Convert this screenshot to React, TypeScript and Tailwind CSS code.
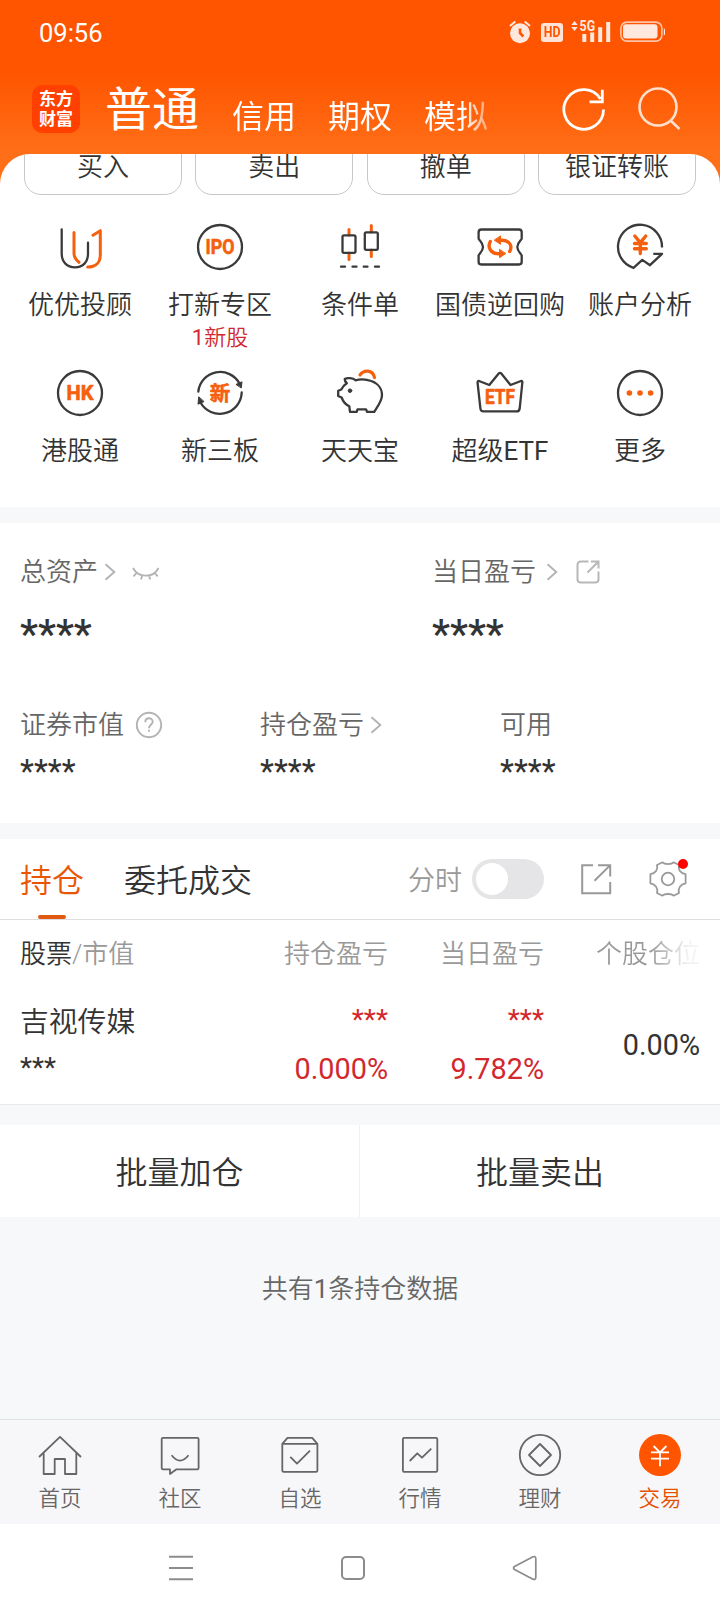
import { useState, type ReactNode } from 'react';

const INK = '#3a3a3a';
const ORANGE = '#f5600f';

const quickActions = ['买入', '卖出', '撤单', '银证转账'];

const Icon48 = ({ children }: { children: ReactNode }) => (
    <svg width="48" height="48" viewBox="0 0 48 48" fill="none" stroke={INK} strokeWidth="2.3" strokeLinecap="round" strokeLinejoin="round">
        {children}
    </svg>
);

interface BadgeTextProps {
    y: number;
    size: number;
    width: number;
    children: string;
}

const BadgeText = ({ y, size, width, children }: BadgeTextProps) => (
    <text
        x="24"
        y={y}
        textAnchor="middle"
        textLength={width}
        lengthAdjust="spacingAndGlyphs"
        fontSize={size}
        fontWeight="700"
        fill={ORANGE}
        stroke={ORANGE}
        strokeWidth="0.6"
        className="font-['Roboto','Noto_Sans_CJK_SC',sans-serif]"
    >
        {children}
    </text>
);

interface Service {
    label: string;
    latin?: string;
    newCount?: number;
    icon: ReactNode;
}

const services: Service[] = [
    {
        label: '优优投顾',
        icon: (
            <Icon48>
                <path d="M5.7 6.3V30.5C5.7 39 11 44.3 19 44.3S32 39 32 30.5V19.7" />
                <path stroke={ORANGE} strokeWidth="3" d="M18 9.5V30C18 34 20 37 23 39.3M37 12.3L44.3 7.7V32C44.3 39.5 39.5 44 31.7 44" />
            </Icon48>
        ),
    },
    {
        label: '打新专区',
        newCount: 1,
        icon: (
            <Icon48>
                <circle cx="24" cy="24" r="22" />
                <BadgeText y={31.2} size={20.5} width={29}>IPO</BadgeText>
            </Icon48>
        ),
    },
    {
        label: '条件单',
        icon: (
            <Icon48>
                <path stroke={ORANGE} strokeWidth="3" d="M13 6.5V12M13 30V36.5M35.3 2.5V9M35.3 27V33.5" />
                <rect x="6.5" y="12.3" width="13" height="17.5" rx="1.5" />
                <rect x="28.8" y="9.3" width="13" height="17.5" rx="1.5" />
                <path d="M5 43.7H9M16.5 43.7H20.5M27.7 43.7H31.5M39 43.7H43" />
            </Icon48>
        ),
    },
    {
        label: '国债逆回购',
        icon: (
            <Icon48>
                <path d="M5.3 6.5H43C44.5 6.5 45.7 7.7 45.7 9.2V15.5C45.7 17 41.3 19.5 41.3 24S45.7 31 45.7 32.5V38.8C45.7 40.3 44.5 41.5 43 41.5H5.3C3.8 41.5 2.6 40.3 2.6 38.8V32.5C2.6 31 7 28.5 7 24S2.6 17 2.6 15.5V9.2C2.6 7.7 3.8 6.5 5.3 6.5Z" />
                <path stroke={ORANGE} strokeWidth="3.4" d="M14.3 18.5C11 24.5 15 30.5 22 30.8H24M33.7 28.5C37 22.5 33 17.3 26 17.2H24" />
                <path fill={ORANGE} stroke={ORANGE} strokeWidth="1" d="M24.5 13.3V21.3L18.5 17.3ZM23.5 26.7V34.7L29.5 30.7Z" />
            </Icon48>
        ),
    },
    {
        label: '账户分析',
        icon: (
            <Icon48>
                <path strokeLinecap="butt" d="M46 24.5A22 22 0 1 0 17.5 44.8L26.3 36.9L34 42.2L46 30.8H37.3" />
                <path stroke={ORANGE} strokeWidth="3.4" d="M18.8 13L24.3 19.7L29.8 13M24.3 20V30.5M18.5 20.5H30.3M18.5 25.8H30.3" />
            </Icon48>
        ),
    },
    {
        label: '港股通',
        icon: (
            <Icon48>
                <circle cx="24" cy="24" r="22" />
                <BadgeText y={31.2} size={20} width={27}>HK</BadgeText>
            </Icon48>
        ),
    },
    {
        label: '新三板',
        icon: (
            <Icon48>
                <path d="M2.3 22.5A22 22 0 0 1 43.5 14.5M45.7 23.5A22 22 0 0 1 4.5 33.5" />
                <path fill={INK} strokeWidth="1" d="M40.3 15.3L46 12.8L45.3 18.6ZM7.7 32.7L2 35.2L2.7 28.2Z" />
                <BadgeText y={31.8} size={20.5} width={20.5}>新</BadgeText>
            </Icon48>
        ),
    },
    {
        label: '天天宝',
        icon: (
            <Icon48>
                <path stroke={ORANGE} strokeWidth="3.2" d="M24 6C27.5 1 36.5 0 38.5 8.5" />
                <path d="M8.7 10C11 8.6 17 8.7 19.5 11.3C23 10.2 28 10 32 11.2C40.5 13 46 18.5 46 26C46 32 42 37 38.3 42.8H31L30 40.3H21.5L20.8 42.8H14L13.3 37.2C9.5 35.5 7.2 33 5.6 28.5L2.2 27V21.7L5.3 20.5C6.5 18 8.3 15.8 10.8 14.2C9.5 13 8.6 11.5 8.7 10Z" />
                <circle cx="14" cy="21.7" r="1.8" fill={INK} strokeWidth="1" />
            </Icon48>
        ),
    },
    {
        label: '超级',
        latin: 'ETF',
        icon: (
            <Icon48>
                <path d="M3 12L13.3 16L22.5 4.7Q24 3 25.5 4.7L34.5 16L45 12Q46.7 11.8 46.3 14L43.7 39.5Q43.3 42.4 40.5 42.4H7.5Q4.7 42.4 4.4 39.5L1.6 14Q1.4 11.8 3 12Z" />
                <BadgeText y={35.2} size={19.5} width={30}>ETF</BadgeText>
            </Icon48>
        ),
    },
    {
        label: '更多',
        icon: (
            <Icon48>
                <circle cx="24" cy="24" r="22" />
                <g fill={ORANGE} stroke="none">
                    <circle cx="13.4" cy="24" r="2.8" />
                    <circle cx="24" cy="24" r="2.8" />
                    <circle cx="34.6" cy="24" r="2.8" />
                </g>
            </Icon48>
        ),
    },
];

const bottomTabs = [
    { label: '首页', icon: <path d="M1 24L22 3.9L43 24M5.7 20.5V41H16.7V26H27V41H38.3V20" /> },
    {
        label: '社区',
        icon: <path d="M5 4.8H39.3Q40.6 4.8 40.6 6V35Q40.6 36.3 39.3 36.3H18.5L12 41V36.3H5Q3.7 36.3 3.7 35V6Q3.7 4.8 5 4.8ZM13.6 22.3Q22 33 30.5 22.3" />,
    },
    {
        label: '自选',
        icon: <path d="M4.3 10.8L9.5 4.8H34.2L39.4 10.8V37.5Q39.4 38.8 38 38.8H5.7Q4.3 38.8 4.3 37.5V10.8H39.4M12.3 23.8L19 30.6L32 17.7" />,
    },
    {
        label: '行情',
        icon: <path d="M6 4.8H38Q39.3 4.8 39.3 6V37.5Q39.3 38.8 38 38.8H6Q4.9 38.8 4.9 37.5V6Q4.9 4.8 6 4.8ZM11.7 28L19.3 20.3L24 24.7L33.3 15.7" />,
    },
    {
        label: '理财',
        icon: (
            <>
                <circle cx="22" cy="22" r="20.2" />
                <path d="M22 11L33 22L22 33L11 22Z" />
            </>
        ),
    },
    {
        label: '交易',
        active: true,
        icon: (
            <>
                <circle cx="22" cy="22" r="21" fill="#ff5500" stroke="none" />
                <path stroke="#ffffff" strokeLinecap="butt" d="M15.6 13L22 19.5L28.4 13M22 19V33.3M13 19.3H31M13 25.7H31" />
            </>
        ),
    },
];

const Chevron = () => (
    <svg width="12" height="18" viewBox="0 0 12 18" fill="none" stroke="#b3b3b3" strokeWidth="1.9">
        <path d="M1.5 1.2L10.3 9L1.5 16.8" />
    </svg>
);

const StatusBar = () => (
    <div className="flex h-16 items-center pl-[39px] text-[#ffe9df]">
        <span className="w-[470px] pt-[3px] text-[25.5px] font-normal text-white">09:56</span>
        <svg width="22" height="24" viewBox="0 0 22 24" fill="none" stroke="currentColor" strokeWidth="2">
            <circle cx="11" cy="13.3" r="10" fill="currentColor" stroke="none" />
            <path d="M1 6L6.3 1.5M21 6L15.7 1.5" />
            <path stroke="#ff5500" strokeWidth="2.6" d="M11 8.5V13L14.3 16.5" />
        </svg>
        <span className="ml-[10px] flex h-[19px] w-[22px] items-center justify-center rounded-[3px] bg-[#ffe3d6] text-[15px] font-bold text-[#ff5500]">
            <span className="scale-x-[0.82]">HD</span>
        </span>
        <svg className="ml-[7px] overflow-visible" width="42" height="24" viewBox="0 0 42 24" fill="currentColor">
            <path d="M1.3 5L4.5 1L7.7 5ZM1.3 7L4.5 11L7.7 7ZM12.3 14H16.3V22H12.3ZM20.2 12.5H24.2V22H20.2ZM28.2 7.3H32.2V22H28.2ZM36.2 2H40.2V22H36.2Z" />
            <text x="9.6" y="11.3" fontSize="14" fontWeight="700" textLength="15.5" lengthAdjust="spacingAndGlyphs">5G</text>
        </svg>
        <svg className="ml-[8px]" width="46" height="22" viewBox="0 0 46 22">
            <rect x="0.9" y="1.1" width="41" height="19" rx="6" fill="none" stroke="currentColor" strokeOpacity="0.75" strokeWidth="1.6" />
            <rect x="3" y="3.3" width="34.5" height="14.3" rx="3" fill="currentColor" />
            <path d="M43.8 7.5Q45 7.5 45 8.7V13Q45 14.3 43.8 14.3Z" fill="currentColor" />
        </svg>
    </div>
);

const AppHeader = () => (
    <header className="h-[154px] bg-[linear-gradient(#ff5500_0,#ff5500_72px,#ff6f18_154px)] text-white">
        <StatusBar />
        <div className="flex h-[90px] pl-8 font-normal">
            <div className="mt-[21px] flex h-12 w-12 flex-col items-center justify-center rounded-[10px] bg-[#ff4000] text-[17px] leading-5 font-bold">
                <span>东方</span>
                <span>财富</span>
            </div>
            <span className="mt-[18px] ml-[25px] text-[47px] leading-[56px] whitespace-nowrap">普通</span>
            <nav className="mt-[31px] ml-[33px] flex gap-8 bg-[linear-gradient(90deg,#fff_232px,#ffffff40_262px)] bg-clip-text text-[32px] leading-[44px] whitespace-nowrap text-transparent">
                <span>信用</span>
                <span>期权</span>
                <span>模拟</span>
            </nav>
            <svg className="mt-[23px] ml-[74px]" width="44" height="44" viewBox="0 0 44 44" fill="none" stroke="currentColor" strokeWidth="2.8">
                <path d="M41.5 22.5A19.8 19.8 0 1 1 38.5 12M40.3 2.8V14.8H27.5" />
            </svg>
            <svg className="mt-[23px] ml-[31px] opacity-80" width="44" height="44" viewBox="0 0 44 44" fill="none" stroke="currentColor" strokeWidth="2.6">
                <circle cx="21" cy="20" r="18.5" />
                <path d="M33.5 33.5L42.5 42" />
            </svg>
        </div>
    </header>
);

const ServicePanel = () => (
    <div className="bg-[#ff6f18]">
        <section className="h-[353px] overflow-hidden rounded-t-[30px] bg-white">
            {/* row is scrolled halfway under the header */}
            <div className="flex h-[41px] items-end gap-[13.3px] overflow-hidden px-6">
                {quickActions.map((label) => (
                    <button key={label} className="h-[57px] flex-1 rounded-[17px] border border-[#c8c8c8] text-[26px] leading-7 text-[#333333]">
                        {label}
                    </button>
                ))}
            </div>
            <div className="grid grid-cols-5 px-[10px] pt-7">
                {services.map((s) => (
                    <div key={s.label} className="flex h-[146px] flex-col items-center text-[26px] leading-9 whitespace-nowrap text-[#333333]">
                        {s.icon}
                        <span className="mt-[16px]">
                            {s.label}
                            {s.latin && <span className="font-normal">{s.latin}</span>}
                        </span>
                        {s.newCount && (
                            <span className="text-[22px] leading-[30px] text-[#d2282d]">
                                <span className="font-normal">{s.newCount}</span>新股
                            </span>
                        )}
                    </div>
                ))}
            </div>
        </section>
    </div>
);

const AssetPanel = () => (
    <section className="h-[300px] bg-white pl-5 text-[26px] text-[#666666]">
        <div className="grid h-[134px] grid-cols-[412px_1fr] pt-[31px]">
            <div>
                <div className="flex h-9 items-center">
                    总资产
                    <span className="ml-[6px]"><Chevron /></span>
                    <svg className="mt-1 ml-[16px]" width="28" height="14" viewBox="0 0 28 14" fill="none" stroke="#b3b3b3" strokeWidth="1.8">
                        <path d="M1 1Q5 8.5 13.7 8.7T26.5 1M5 5.5L1.5 9.3M10.3 8.3L9 12.5M17 8.3L18.2 12.5M22.3 5.5L25.7 9.3" />
                    </svg>
                </div>
                <div className="mt-[19px] text-[40.5px] leading-[50px] font-medium text-[#333333]">****</div>
            </div>
            <div>
                <div className="flex h-9 items-center">
                    当日盈亏
                    <span className="ml-[10px]"><Chevron /></span>
                    <svg className="ml-[18px]" width="24" height="24" viewBox="0 0 24 24" fill="none" stroke="#b8b8b8" strokeWidth="2">
                        <path d="M12.5 1.5H5Q1.5 1.5 1.5 5V19Q1.5 22.5 5 22.5H19Q22.5 22.5 22.5 19V11.5M15 1.5H22.5V8.5M22 2L11.5 12.5" />
                    </svg>
                </div>
                <div className="mt-[19px] text-[40.5px] leading-[50px] font-medium text-[#333333]">****</div>
            </div>
        </div>
        <div className="grid grid-cols-[240px_240px_1fr] pt-[50px]">
            <div>
                <div className="flex h-9 items-center">
                    证券市值
                    <svg className="ml-[11px]" width="28" height="28" viewBox="0 0 28 28" fill="none" stroke="#b3b3b3" strokeWidth="1.9">
                        <circle cx="14" cy="14" r="12.2" />
                        <path d="M10.3 11.2C10.3 6 17.7 6 17.7 10.8C17.7 13.5 14 13.5 14 17.3M14 18.8V20.8" />
                    </svg>
                </div>
                <div className="mt-[9px] text-[32.3px] leading-10 font-normal text-[#333333]">****</div>
            </div>
            <div>
                <div className="flex h-9 items-center">
                    持仓盈亏
                    <span className="ml-[6px]"><Chevron /></span>
                </div>
                <div className="mt-[9px] text-[32.3px] leading-10 font-normal text-[#333333]">****</div>
            </div>
            <div>
                <div className="flex h-9 items-center">可用</div>
                <div className="mt-[9px] text-[32.3px] leading-10 font-normal text-[#333333]">****</div>
            </div>
        </div>
    </section>
);

const HoldingTabs = () => {
    const [intraday, setIntraday] = useState(false);

    return (
        <div className="flex h-[81px] items-start border-b border-[#dcdde0] pl-[20px] text-[32px]">
            <div className="flex h-20 flex-col text-[#ea5504]">
                <span className="mt-[19px] leading-[46px]">持仓</span>
                <span className="mt-auto ml-[18px] h-1 w-7 rounded-sm bg-[#e25a12]" />
            </div>
            <span className="mt-[19px] ml-10 leading-[46px] text-[#333333]">委托成交</span>
            <span className="mt-[22px] ml-[156px] text-[27px] leading-10 text-[#999999]">分时</span>
            <button
                onClick={() => setIntraday(!intraday)}
                className={`mt-5 ml-[10px] flex h-10 w-[72px] items-center rounded-full bg-[#e5e5e7] px-1 ${intraday ? 'justify-end' : 'justify-start'}`}
            >
                <span className="h-8 w-8 rounded-full bg-white" />
            </button>
            <svg className="mt-[25px] ml-[37px]" width="31" height="31" viewBox="0 0 31 31" fill="none" stroke="#999999" strokeWidth="2">
                <path d="M12 1.2H1.2V29.2H29.2V18M17 1.2H29.2V12.5M28.8 1.6L13.5 16.7" />
            </svg>
            <div className="relative mt-[21px] ml-[37px]">
                <svg width="38" height="38" viewBox="0 0 38 38" fill="none" stroke="#999999" strokeWidth="1.8" strokeLinejoin="round">
                    <path d="M13.4 2.3C15.5 4.6 22.5 4.6 24.6 2.3L30 5C28.7 9.5 31.5 13.3 36.6 14.2V23.4C31.5 24.3 28.7 28.5 30 33L24.6 35.7C22.5 33.4 15.5 33.4 13.4 35.7L8 33C9.3 28.5 6.5 24.3 1.4 23.4V14.2C6.5 13.3 9.3 9.5 8 5Z" />
                    <circle cx="19" cy="19" r="6.3" />
                </svg>
                <span className="absolute top-[-1px] right-[-1px] h-[10px] w-[10px] rounded-full bg-[#ff0000]" />
            </div>
        </div>
    );
};

const HoldingTable = () => (
    <div className="h-[185px] border-b border-[#e6e8ea] px-[20px] text-[#333333]">
        <div className="grid h-[68px] grid-cols-[208px_160px_156px_156px] items-center text-right text-[26px] whitespace-nowrap text-[#999999]">
            <span className="text-left"><span className="text-[#333333]">股票</span>/市值</span>
            <span>持仓盈亏</span>
            <span>当日盈亏</span>
            <span className="bg-[linear-gradient(90deg,#999_50px,#999_105px,#99999920_145px)] bg-clip-text text-transparent">个股仓位</span>
        </div>
        <div className="grid grid-cols-[208px_160px_156px_156px] text-right text-[28.8px]">
            <div className="text-left">
                <div className="mt-[13px] leading-[42px]">吉视传媒</div>
                <div className="mt-[7px] text-[28px] leading-9 font-normal">***</div>
            </div>
            <div className="font-normal text-[#d2282d]">
                <div className="mt-[14px] text-[28px] leading-9">***</div>
                <div className="mt-[13px] leading-9">0.000%</div>
            </div>
            <div className="font-normal text-[#d2282d]">
                <div className="mt-[14px] text-[28px] leading-9">***</div>
                <div className="mt-[13px] leading-9">9.782%</div>
            </div>
            <div className="mt-[39px] leading-9 font-normal">0.00%</div>
        </div>
    </div>
);

const BottomTabs = () => (
    <nav className="grid h-[105px] grid-cols-6 border-t border-[#dfe1e4] bg-[#f7f7fa] pt-[13px]">
        {bottomTabs.map((t) => (
            <div key={t.label} className={`flex flex-col items-center text-[21.5px] leading-[30px] ${t.active ? 'text-[#e65100]' : 'text-[#666666]'}`}>
                <svg width="44" height="44" viewBox="0 0 44 44" fill="none" stroke="#666666" strokeWidth="1.8" strokeLinejoin="round">
                    {t.icon}
                </svg>
                <span className="mt-[7px]">{t.label}</span>
            </div>
        ))}
    </nav>
);

const SystemNav = () => (
    <div className="flex h-22 items-center bg-white pl-[168px] text-[#8c8c8c]">
        <svg width="26" height="26" viewBox="0 0 26 26" stroke="currentColor" strokeWidth="2">
            <path d="M1 1.8H25M1 13H25M1 24.2H25" />
        </svg>
        <span className="ml-[147px] h-6 w-6 rounded-[5px] border-2 border-current" />
        <svg className="ml-[147px]" width="26" height="26" viewBox="0 0 26 26" fill="none" stroke="currentColor" strokeWidth="1.7" strokeLinejoin="round">
            <path d="M2.5 11.5L21 1.8Q23.6 1 23.8 3.5V22.5Q23.6 25 21 24.2L2.5 14.5Q.5 13 2.5 11.5Z" />
        </svg>
    </div>
);

export default function App() {
    return (
        <div className="flex h-[1612px] w-[720px] flex-col overflow-hidden bg-[#f7f8fa] font-['Roboto','Noto_Sans_CJK_SC',sans-serif] font-[350]">
            <AppHeader />
            <ServicePanel />
            <div className="h-4" />
            <AssetPanel />
            <div className="h-4" />
            <section className="bg-white">
                <HoldingTabs />
                <HoldingTable />
            </section>
            <div className="mt-5 grid h-[92px] grid-cols-2 bg-white text-[32px] text-[#333333]">
                <button className="border-r border-[#f0f1f3] pt-1">批量加仓</button>
                <button className="pt-1">批量卖出</button>
            </div>
            <div className="flex-1 pt-[54px] text-center text-[26px] leading-9 text-[#666666]">
                共有<span className="font-normal">1</span>条持仓数据
            </div>
            <BottomTabs />
            <SystemNav />
        </div>
    );
}
